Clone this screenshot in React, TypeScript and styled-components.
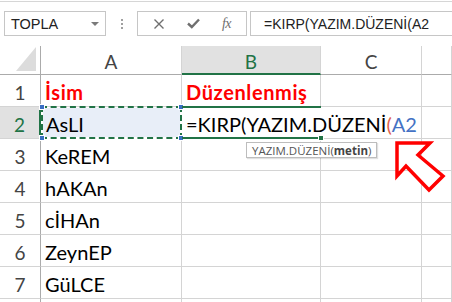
import React from 'react';
import styled, { createGlobalStyle, css } from 'styled-components';

const GREEN = '#217346';
const GRID = '#d4d4d4';
const EDGE = '#ababab';

const GlobalStyle = createGlobalStyle`
  html, body {
    margin: 0;
    padding: 0;
    background: #fff;
  }
  body {
    width: 452px;
    height: 302px;
    overflow: hidden;
    font-family: Lato, 'Liberation Sans', sans-serif;
  }
  * {
    box-sizing: border-box;
  }
`;

const Page = styled.div`
  display: flex;
  flex-direction: column;
`;

const TopBar = styled.div`
  margin-top: 1px;
  border-top: 1px solid #d6d6d6;
  padding: 9px 0 0 4px;
  display: flex;
  align-items: center;
`;

const NameBox = styled.div`
  width: 102px;
  height: 25px;
  border: 1px solid #c6c6c6;
  display: flex;
  align-items: center;
  padding: 0 6px 0 6px;
  font-family: 'Liberation Sans', Arial, sans-serif;
  font-size: 14.5px;
  color: #222;
`;

const Caret = styled.span`
  margin-left: auto;
  width: 0;
  height: 0;
  border-left: 4px solid transparent;
  border-right: 4px solid transparent;
  border-top: 4px solid #7a7a7a;
`;

const Dots = styled.div`
  width: 31px;
  display: flex;
  flex-direction: column;
  align-items: center;
  gap: 2px;

  span {
    width: 2px;
    height: 2px;
    background: #a0a0a0;
  }
`;

const IconBox = styled.div`
  width: 110px;
  height: 25px;
  border: 1px solid #c6c6c6;
  display: flex;
  align-items: center;
  justify-content: space-around;
  padding: 0 4px;
  color: #6f6f6f;
`;

const Fx = styled.span`
  font-family: 'Liberation Serif', serif;
  font-style: italic;
  font-size: 14px;
  color: #6f6f6f;
  letter-spacing: -0.5px;
`;

const FormulaBox = styled.div`
  flex: 1;
  margin-left: 3px;
  height: 25px;
  border: 1px solid #c6c6c6;
  border-right: none;
  display: flex;
  align-items: center;
  padding-left: 13px;
  font-family: 'Liberation Sans', Arial, sans-serif;
  font-size: 14px;
  color: #222;
  white-space: nowrap;
  overflow: hidden;
`;

const Sheet = styled.div`
  position: relative;
  margin-top: 10px;
`;

const Grid = styled.div`
  display: grid;
  grid-template-columns: 41px 141px 139px 101px 1fr;
  grid-template-rows: 29px repeat(8, 32px);
`;

const Corner = styled.div`
  position: relative;
  border-right: 1px solid ${EDGE};
  border-bottom: 1px solid ${EDGE};

  &::after {
    content: '';
    position: absolute;
    right: 4px;
    bottom: 3px;
    width: 20px;
    height: 24px;
    background: #dcdcdc;
    clip-path: polygon(100% 0, 100% 100%, 0 100%);
  }
`;

const ColHeader = styled.div<{ $selected?: boolean }>`
  display: flex;
  align-items: center;
  justify-content: center;
  padding-top: 2px;
  font-size: 19px;
  color: #444;
  border-right: 1px solid ${GRID};
  border-bottom: 1px solid ${EDGE};
  ${({ $selected }) =>
    $selected &&
    css`
      background: #e1e1e1;
      color: ${GREEN};
      border-bottom: 2px solid ${GREEN};
      padding-top: 3px;
    `}
`;

const RowHeader = styled.div<{ $selected?: boolean }>`
  display: flex;
  align-items: center;
  justify-content: center;
  padding-top: 3px;
  font-size: 19px;
  color: #444;
  border-right: 1px solid ${EDGE};
  border-bottom: 1px solid ${GRID};
  ${({ $selected }) =>
    $selected &&
    css`
      background: #e1e1e1;
      color: ${GREEN};
      border-right: 2px solid ${GREEN};
    `}
`;

const Cell = styled.div<{ $title?: boolean }>`
  display: flex;
  align-items: flex-end;
  padding: 0 0 4px 4px;
  font-size: 20px;
  line-height: 1;
  color: #000;
  white-space: nowrap;
  border-right: 1px solid ${GRID};
  border-bottom: 1px solid ${GRID};
  ${({ $title }) =>
    $title &&
    css`
      color: #ff0000;
      font-weight: 700;
      letter-spacing: 0.6px;
    `}
`;

const MarqueeCell = styled(Cell)`
  position: relative;
  margin-top: -1px;
  padding: 0 0 3px 3px;
  border: 2px dashed ${GREEN};
  background: #e8eef8;
  background-clip: padding-box;
`;

const Handle = styled.span<{ $x: 'left' | 'right'; $y: 'top' | 'bottom' }>`
  position: absolute;
  width: 6px;
  height: 6px;
  background: #3a6fc4;
  border: 1px solid #fff;
  ${({ $x }) => ($x === 'left' ? 'left: -4px;' : 'right: -4px;')}
  ${({ $y }) => ($y === 'top' ? 'top: -4px;' : 'bottom: -4px;')}
`;

const EditCell = styled(Cell)`
  position: relative;
  z-index: 2;
  margin-top: -1px;
  padding-bottom: 3px;
  border-right: none;
  border-top: 2px solid ${GREEN};
  border-bottom: 2px solid ${GREEN};
  overflow: visible;
`;

const FillHandle = styled.span`
  position: absolute;
  right: -3px;
  bottom: -4px;
  width: 6px;
  height: 6px;
  background: ${GREEN};
  border: 1px solid #fff;
`;

const Paren = styled.span`
  color: #e0604c;
`;

const Ref = styled.span`
  color: #4472c4;
`;

const TextCursor = styled.span`
  display: inline-block;
  width: 1px;
  height: 28px;
  margin-left: 1px;
  margin-bottom: -4px;
  background: #000;
`;

const Tooltip = styled.div`
  position: absolute;
  left: 246px;
  top: 96px;
  height: 16px;
  padding: 0 5px;
  display: flex;
  align-items: center;
  background: #fff;
  border: 1px solid #bdbdbd;
  box-shadow: 1px 1px 1px rgba(0, 0, 0, 0.12);
  font-family: 'Open Sans', 'Noto Sans', sans-serif;
  font-size: 11.5px;
  color: #555;
  z-index: 3;

  b {
    font-weight: 700;
    color: #444;
  }
`;

const Arrow = styled.svg`
  position: absolute;
  left: 393px;
  top: 94px;
  z-index: 3;
`;

const names = ['KeREM', 'hAKAn', 'cİHAn', 'ZeynEP', 'GüLCE'];

function App() {
  return (
    <Page>
      <GlobalStyle />
      <TopBar>
        <NameBox>
          TOPLA
          <Caret />
        </NameBox>
        <Dots>
          <span />
          <span />
          <span />
        </Dots>
        <IconBox>
          <svg width="12" height="12" viewBox="0 0 12 12">
            <path d="M1.5 1.5 L10.5 10.5 M10.5 1.5 L1.5 10.5" stroke="#6f6f6f" strokeWidth="1.4" />
          </svg>
          <svg width="13" height="11" viewBox="0 0 13 11">
            <path d="M1 5.5 L4.8 9 L12 1.5" stroke="#6f6f6f" strokeWidth="2.4" fill="none" />
          </svg>
          <Fx>fx</Fx>
        </IconBox>
        <FormulaBox>=KIRP(YAZIM.DÜZENİ(A2</FormulaBox>
      </TopBar>

      <Sheet>
        <Grid>
          <Corner />
          <ColHeader>A</ColHeader>
          <ColHeader $selected>B</ColHeader>
          <ColHeader>C</ColHeader>
          <ColHeader />

          <RowHeader>1</RowHeader>
          <Cell $title>İsim</Cell>
          <Cell $title>Düzenlenmiş</Cell>
          <Cell />
          <Cell />

          <RowHeader $selected>2</RowHeader>
          <MarqueeCell>
            AsLI
            <Handle $x="left" $y="top" />
            <Handle $x="right" $y="top" />
            <Handle $x="left" $y="bottom" />
            <Handle $x="right" $y="bottom" />
          </MarqueeCell>
          <EditCell>
            =KIRP(YAZIM.DÜZENİ<Paren>(</Paren>
            <Ref>A2</Ref>
            <TextCursor />
            <FillHandle />
          </EditCell>
          <Cell />
          <Cell />

          {names.map((name, i) => (
            <React.Fragment key={name}>
              <RowHeader>{i + 3}</RowHeader>
              <Cell>{name}</Cell>
              <Cell />
              <Cell />
              <Cell />
            </React.Fragment>
          ))}

          <RowHeader />
          <Cell />
          <Cell />
          <Cell />
          <Cell />
        </Grid>

        <Tooltip>
          YAZIM.DÜZENİ(<b>metin</b>)
        </Tooltip>

        <Arrow width="56" height="56" viewBox="0 0 56 56">
          <polygon
            points="4,3 37,3 25,15 50,36 36,50 13,26 4,36"
            fill="#fff"
            stroke="#ff0000"
            strokeWidth="3.5"
            strokeLinejoin="miter"
          />
        </Arrow>
      </Sheet>
    </Page>
  );
}

export default App;
